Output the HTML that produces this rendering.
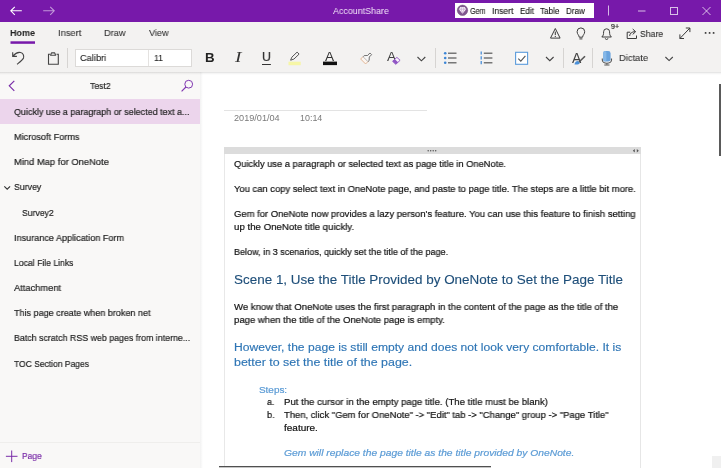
<!DOCTYPE html>
<html lang="en">
<head>
<meta charset="utf-8">
<title>AccountShare - OneNote</title>
<style>
html,body{margin:0;padding:0;}
body{width:721px;height:468px;overflow:hidden;background:#fff;position:relative;font-family:"Liberation Sans",sans-serif;}
.abs{position:absolute;}
#titlebar{left:0;top:0;width:721px;height:22px;background:#7719aa;}
#ribbon{left:0;top:22px;width:721px;height:50px;background:#f3f2f1;}
#ribshadow{left:0;top:72px;width:721px;height:3px;background:linear-gradient(to bottom,rgba(0,0,0,.13),rgba(0,0,0,.04) 50%,rgba(0,0,0,0));}
#gembox{left:455px;top:3px;width:139px;height:15px;background:#fff;}
#fontbox{left:75px;top:49px;width:117px;height:18px;background:#fff;border:1px solid #dcdad8;box-sizing:border-box;}
#fontdiv{left:148px;top:50px;width:1px;height:16px;background:#e4e2e0;}
#sidebar{left:0;top:72px;width:200px;height:396px;background:#f9f8f7;}
#sideshadow{left:200px;top:72px;width:3px;height:396px;background:linear-gradient(to right,rgba(0,0,0,.05),rgba(0,0,0,0));}
#corner{left:712px;top:456px;width:9px;height:12px;background:#f0f0f0;}
#sel{left:0;top:99px;width:200px;height:25px;background:#ecd5ec;}
#sidesep{left:0;top:442px;width:200px;height:1px;background:#efeeec;}
#note{left:224px;top:147px;width:417px;height:330px;border-left:1px solid #e8e8e8;border-right:1px solid #e6e6e6;box-sizing:border-box;}
#notebar{left:224px;top:147px;width:417px;height:7px;background:#dcdcdc;}
#titleline{left:224px;top:110px;width:203px;height:1px;background:#e3e3e3;}
#vscroll{left:719px;top:84px;width:2px;height:72px;background:#5a5a5a;}
#hscroll{left:219px;top:466px;width:272px;height:2px;background:linear-gradient(to bottom,#505050 0,#505050 50%,#c6c6c6 50%,#c6c6c6 100%);}
.t{position:absolute;white-space:nowrap;transform-origin:0 0;display:block;-webkit-text-stroke:0.2px;will-change:transform;}
svg{position:absolute;left:0;top:0;}
</style>
</head>
<body>
<div class="abs" id="titlebar"></div>
<div class="abs" id="ribbon"></div>
<div class="abs" id="gembox"></div>
<div class="abs" id="fontbox"></div>
<div class="abs" id="fontdiv"></div>
<div class="abs" id="sidebar"></div>
<div class="abs" id="sel"></div>
<div class="abs" id="sidesep"></div>
<div class="abs" id="sideshadow"></div>
<div class="abs" id="ribshadow"></div>
<div class="abs" id="titleline"></div>
<div class="abs" id="note"></div>
<div class="abs" id="notebar"></div>
<div class="abs" id="vscroll"></div>
<div class="abs" id="hscroll"></div>
<div class="abs" id="corner"></div>
<span class="t" id="t0" style="left:332.9px;top:6.07px;font-size:9.6px;line-height:9.6px;color:#f3e6f8;-webkit-text-stroke:0;transform:scaleX(0.9259)">AccountShare</span>
<span class="t" id="t1" style="left:470.4px;top:6.98px;font-size:9.0px;line-height:9.0px;color:#111;-webkit-text-stroke:0.1px;transform:scaleX(0.7994)">Gem</span>
<span class="t" id="t2" style="left:492.1px;top:6.98px;font-size:9.0px;line-height:9.0px;color:#111;-webkit-text-stroke:0.1px;transform:scaleX(0.9505)">Insert</span>
<span class="t" id="t3" style="left:519.6px;top:6.98px;font-size:9.0px;line-height:9.0px;color:#111;-webkit-text-stroke:0.1px;transform:scaleX(0.8959)">Edit</span>
<span class="t" id="t4" style="left:540.1px;top:6.98px;font-size:9.0px;line-height:9.0px;color:#111;-webkit-text-stroke:0.1px;transform:scaleX(0.9017)">Table</span>
<span class="t" id="t5" style="left:566.1px;top:6.98px;font-size:9.0px;line-height:9.0px;color:#111;-webkit-text-stroke:0.1px;transform:scaleX(0.8993)">Draw</span>
<span class="t" id="t6" style="left:10.1px;top:28.00px;font-size:9.8px;line-height:9.8px;color:#222;font-weight:bold;-webkit-text-stroke:0;transform:scaleX(0.9216)">Home</span>
<span class="t" id="t7" style="left:57.6px;top:28.00px;font-size:9.8px;line-height:9.8px;color:#333;-webkit-text-stroke:0.1px;transform:scaleX(0.9545)">Insert</span>
<span class="t" id="t8" style="left:104.1px;top:28.00px;font-size:9.8px;line-height:9.8px;color:#333;-webkit-text-stroke:0.1px;transform:scaleX(0.9443)">Draw</span>
<span class="t" id="t9" style="left:149.1px;top:28.00px;font-size:9.8px;line-height:9.8px;color:#333;-webkit-text-stroke:0.1px;transform:scaleX(0.9306)">View</span>
<span class="t" id="t10" style="left:610.8px;top:24.04px;font-size:6.8px;line-height:6.8px;color:#333;transform:scaleX(1.0452)">9+</span>
<span class="t" id="t11" style="left:640.1px;top:28.70px;font-size:9.8px;line-height:9.8px;color:#333;-webkit-text-stroke:0.15px;transform:scaleX(0.8832)">Share</span>
<span class="t" id="t12" style="left:80.3px;top:53.30px;font-size:9.8px;line-height:9.8px;color:#222;-webkit-text-stroke:0.1px;transform:scaleX(0.9436)">Calibri</span>
<span class="t" id="t13" style="left:153.9px;top:53.30px;font-size:9.8px;line-height:9.8px;color:#222;-webkit-text-stroke:0.1px;transform:scaleX(0.8750)">11</span>
<span class="t" id="t14" style="left:619.2px;top:53.30px;font-size:9.8px;line-height:9.8px;color:#333;-webkit-text-stroke:0.1px;transform:scaleX(0.9574)">Dictate</span>
<span class="t" id="t15" style="left:205.3px;top:51.00px;font-size:13px;line-height:13px;color:#222;font-weight:bold;-webkit-text-stroke:0;transform:scaleX(1.0223)">B</span>
<span class="t" id="t16" style="left:235.2px;top:50.08px;font-size:14.2px;line-height:14.2px;color:#333;-webkit-text-stroke:0;font-style:italic;font-family:'Liberation Serif',serif;transform:scaleX(1.3729)">I</span>
<span class="t" id="t17" style="left:261.9px;top:51.42px;font-size:12.5px;line-height:12.5px;color:#333;border-bottom:1px solid #333;padding-bottom:0.5px;transform:scaleX(0.9855)">U</span>
<span class="t" id="t18" style="left:325.4px;top:50.84px;font-size:12px;line-height:12px;color:#333;-webkit-text-stroke:0;transform:scaleX(1.1353)">A</span>
<span class="t" id="t19" style="left:386.8px;top:50.72px;font-size:12.5px;line-height:12.5px;color:#444;-webkit-text-stroke:0;transform:scaleX(1.0906)">A</span>
<span class="t" id="t20" style="left:572.0px;top:50.95px;font-size:14px;line-height:14px;color:#444;-webkit-text-stroke:0;transform:scaleX(0.9953)">A</span>
<span class="t" id="t21" style="left:90.0px;top:81.10px;font-size:9.8px;line-height:9.8px;color:#222;transform:scaleX(0.8838)">Test2</span>
<span class="t" id="t22" style="left:14.0px;top:107.00px;font-size:9.8px;line-height:9.8px;color:#222;transform:scaleX(0.9156)">Quickly use a paragraph or selected text a...</span>
<span class="t" id="t23" style="left:14.0px;top:132.15px;font-size:9.8px;line-height:9.8px;color:#222;transform:scaleX(0.9328)">Microsoft Forms</span>
<span class="t" id="t24" style="left:14.0px;top:157.30px;font-size:9.8px;line-height:9.8px;color:#222;transform:scaleX(0.9565)">Mind Map for OneNote</span>
<span class="t" id="t25" style="left:14.0px;top:182.45px;font-size:9.8px;line-height:9.8px;color:#222;transform:scaleX(0.8951)">Survey</span>
<span class="t" id="t26" style="left:22.4px;top:207.60px;font-size:9.8px;line-height:9.8px;color:#222;transform:scaleX(0.8817)">Survey2</span>
<span class="t" id="t27" style="left:14.0px;top:232.75px;font-size:9.8px;line-height:9.8px;color:#222;transform:scaleX(0.9274)">Insurance Application Form</span>
<span class="t" id="t28" style="left:14.0px;top:257.90px;font-size:9.8px;line-height:9.8px;color:#222;transform:scaleX(0.8811)">Local File Links</span>
<span class="t" id="t29" style="left:14.0px;top:283.05px;font-size:9.8px;line-height:9.8px;color:#222;transform:scaleX(0.9483)">Attachment</span>
<span class="t" id="t30" style="left:14.0px;top:308.20px;font-size:9.8px;line-height:9.8px;color:#222;transform:scaleX(0.9214)">This page create when broken net</span>
<span class="t" id="t31" style="left:14.0px;top:333.35px;font-size:9.8px;line-height:9.8px;color:#222;transform:scaleX(0.9014)">Batch scratch RSS web pages from interne...</span>
<span class="t" id="t32" style="left:14.0px;top:358.50px;font-size:9.8px;line-height:9.8px;color:#222;transform:scaleX(0.8680)">TOC Section Pages</span>
<span class="t" id="t33" style="left:21.6px;top:450.50px;font-size:9.8px;line-height:9.8px;color:#7a2da8;transform:scaleX(0.8606)">Page</span>
<span class="t" id="t34" style="left:233.6px;top:114.17px;font-size:8.3px;line-height:8.3px;color:#7a7a7a;-webkit-text-stroke:0;transform:scaleX(1.1004)">2019/01/04</span>
<span class="t" id="t35" style="left:300.1px;top:114.17px;font-size:8.3px;line-height:8.3px;color:#7a7a7a;-webkit-text-stroke:0;transform:scaleX(1.0739)">10:14</span>
<span class="t" id="t36" style="left:233.9px;top:158.59px;font-size:9.7px;line-height:9.7px;color:#111;transform:scaleX(0.9621)">Quickly use a paragraph or selected text as page title in OneNote.</span>
<span class="t" id="t37" style="left:233.9px;top:183.59px;font-size:9.7px;line-height:9.7px;color:#111;transform:scaleX(0.9715)">You can copy select text in OneNote page, and paste to page title. The steps are a little bit more.</span>
<span class="t" id="t38" style="left:233.9px;top:208.59px;font-size:9.7px;line-height:9.7px;color:#111;transform:scaleX(0.9743)">Gem for OneNote now provides a lazy person's feature. You can use this feature to finish setting</span>
<span class="t" id="t39" style="left:233.9px;top:221.59px;font-size:9.7px;line-height:9.7px;color:#111;transform:scaleX(0.9971)">up the OneNote title quickly.</span>
<span class="t" id="t40" style="left:233.9px;top:246.59px;font-size:9.7px;line-height:9.7px;color:#111;transform:scaleX(0.9333)">Below, in 3 scenarios, quickly set the title of the page.</span>
<span class="t" id="t41" style="left:233.9px;top:272.54px;font-size:13.3px;line-height:13.3px;color:#1e4e79;-webkit-text-stroke:0.12px;transform:scaleX(1.0118)">Scene 1, Use the Title Provided by OneNote to Set the Page Title</span>
<span class="t" id="t42" style="left:233.9px;top:301.99px;font-size:9.7px;line-height:9.7px;color:#111;transform:scaleX(0.9847)">We know that OneNote uses the first paragraph in the content of the page as the title of the</span>
<span class="t" id="t43" style="left:233.9px;top:314.99px;font-size:9.7px;line-height:9.7px;color:#111;transform:scaleX(0.9823)">page when the title of the OneNote page is empty.</span>
<span class="t" id="t44" style="left:233.9px;top:340.70px;font-size:11.7px;line-height:11.7px;color:#2e75b5;-webkit-text-stroke:0.15px;transform:scaleX(1.0350)">However, the page is still empty and does not look very comfortable. It is</span>
<span class="t" id="t45" style="left:233.9px;top:356.30px;font-size:11.7px;line-height:11.7px;color:#2e75b5;-webkit-text-stroke:0.15px;transform:scaleX(1.0630)">better to set the title of the page.</span>
<span class="t" id="t46" style="left:258.6px;top:384.79px;font-size:9.7px;line-height:9.7px;color:#5b9bd5;transform:scaleX(1.0230)">Steps:</span>
<span class="t" id="t47" style="left:266.9px;top:397.39px;font-size:9.7px;line-height:9.7px;color:#111;transform:scaleX(0.9019)">a.</span>
<span class="t" id="t48" style="left:283.6px;top:397.39px;font-size:9.7px;line-height:9.7px;color:#111;transform:scaleX(0.9881)">Put the cursor in the empty page title. (The title must be blank)</span>
<span class="t" id="t49" style="left:266.9px;top:410.19px;font-size:9.7px;line-height:9.7px;color:#111;transform:scaleX(0.9390)">b.</span>
<span class="t" id="t50" style="left:283.6px;top:410.19px;font-size:9.7px;line-height:9.7px;color:#111;transform:scaleX(0.9742)">Then, click "Gem for OneNote" -&gt; "Edit" tab -&gt; "Change" group -&gt; "Page Title"</span>
<span class="t" id="t51" style="left:283.6px;top:422.99px;font-size:9.7px;line-height:9.7px;color:#111;transform:scaleX(1.0317)">feature.</span>
<span class="t" id="t52" style="left:283.6px;top:447.99px;font-size:9.7px;line-height:9.7px;color:#5b9bd5;font-style:italic;transform:scaleX(1.0612)">Gem will replace the page title as the title provided by OneNote.</span>
<svg width="721" height="468" viewBox="0 0 721 468" fill="none" stroke-linecap="butt">
<!-- title bar -->
<g stroke="#fff">
<path d="M21.800 10.800H10.800M14.800 6.800L10.800 10.800l4 4" stroke-width="1.100"/>
<path d="M43.200 10.800h11M50.200 6.800l4 4-4 4" stroke-width="1.100" opacity=".55"/>
<path d="M608.500 5.500v10" stroke-width="1" opacity=".7"/>
<path d="M638 11h7.500" stroke-width="1" opacity=".72"/>
<rect x="670.500" y="7.500" width="7" height="7" stroke-width="1" opacity=".72"/>
<path d="M702.500 7l8 8M710.500 7l-8 8" stroke-width="1" opacity=".72"/>
</g>
<!-- gem icon -->
<circle cx="462.500" cy="10.300" r="5.200" fill="#80588f" stroke="#6b4479" stroke-width=".5"/>
<path d="M458.800 9.200l1.600-2.100h4.200l1.600 2.100-3.700 4.600z" fill="#f6eef8"/>
<path d="M458.800 9.200h7.400M461.100 9.200l1.400 4.400M463.900 9.200l-1.400 4.400M461.100 9.200l.7-2M463.900 9.200l-.7-2" stroke="#a583b3" stroke-width=".45"/>
<!-- home underline -->
<rect x="10.500" y="41.300" width="24.500" height="2.500" fill="#7719aa"/>
<!-- tab row icons -->
<g stroke="#3a3a3a" stroke-width="1">
<path d="M555.300 28.500l4.800 9.600h-9.600z" stroke-linejoin="round"/>
<path d="M555.300 31.600v3.400M555.300 35.900v1.100"/>
<path d="M579.200 37.200c0-2.100-2.100-2.900-2.100-5.500a3.800 3.800 0 0 1 7.600 0c0 2.600-2.100 3.400-2.100 5.500zM579.400 38.900h3"/>
<path d="M601.800 37h9.600c-1.600-1.400-1.800-2.600-1.800-5.200a3 3 0 0 0-6 0c0 2.600-.2 3.800-1.800 5.200zM605.300 38.300a1.300 1.200 0 0 0 2.600 0"/>
<path d="M630.300 32.200h-3.100v6.300h9.300v-3M629.600 36c.3-2.700 2.300-4.300 5.400-4.300M632.700 29l3 2.700-3 2.700" stroke-linejoin="round"/>
<path d="M679.900 38.500l10-10.500M685.800 28h4.100v4.100M679.900 34.400v4.100h4.100"/>
</g>
<g fill="#333"><circle cx="705.600" cy="32.900" r=".95"/><circle cx="709.600" cy="32.900" r=".95"/><circle cx="713.600" cy="32.900" r=".95"/></g>
<!-- toolbar -->
<g stroke="#444" stroke-width="1.100">
<path d="M12.700 52.200v4.200h4.200M12.900 56.200c2.200-2.700 5.200-4.200 7.600-3.700 2.500.5 3.700 3 3 5.500-.5 1.600-2.500 3.100-6.500 6.300"/>
<path d="M50.300 54.200h-1.800v10h9.800v-10h-1.800" stroke-linejoin="miter"/>
<path d="M50.600 55.300l.9-2.400h3.200l.9 2.400z" fill="#fff" stroke-linejoin="round"/>
</g>
<g stroke="#d6d4d2" stroke-width="1">
<path d="M67.500 48v20M435.500 48v20M563.500 48v20M592.500 48v20"/>
</g>
<!-- highlighter -->
<rect x="288.500" y="61.700" width="12.200" height="3.500" fill="#f6f6a6"/>
<path d="M290.600 60.200l1.300-3.100 5.200-5 2 2-5.200 5-3.300 1.100z" stroke="#555" stroke-width="1" stroke-linejoin="round"/>
<!-- font color -->
<rect x="323" y="61.600" width="14" height="3.500" fill="#111"/>
<!-- format painter -->
<g transform="translate(366.300 58.300) rotate(45)">
<path d="M-1.200 -6.300h2.400v3.300l2.400 2.600v1.700h-7v-1.700l2.400-2.600z" fill="#f7f7f7" stroke="#6a6a6a" stroke-width=".9" stroke-linejoin="round"/>
<path d="M-3.500 1.300v3.200h7v-3.200" fill="#fdf6f0" stroke="#e0b394" stroke-width=".9" stroke-linejoin="round"/>
</g>
<!-- clear formatting eraser -->
<path d="M392.600 61.300l4.300-3.900 3.200 2.900-4.300 4z" fill="#fbf6fd" stroke="#8a4cc0" stroke-width=".9" stroke-linejoin="round"/>
<path d="M392.600 61.300l2.300-2.100 3.200 3-2.300 2.100z" fill="#8f55c4"/>
<!-- chevrons -->
<g stroke="#444" stroke-width="1.100">
<path d="M417.500 57l3.900 3.800 3.900-3.800"/>
<path d="M546 57l3.800 3.700 3.800-3.700"/>
<path d="M665.400 57l3.700 3.600 3.700-3.600"/>
</g>
<!-- bullets -->
<g fill="#3c86d6"><circle cx="445.200" cy="53.200" r="1.300"/><circle cx="445.200" cy="58" r="1.300"/><circle cx="445.200" cy="62.800" r="1.300"/></g>
<g stroke="#777" stroke-width="1.400"><path d="M448 53.200h8.500M448 58h8.500M448 62.800h8.500"/></g>
<!-- numbered -->
<g stroke="#3c86d6" stroke-width="1.200"><path d="M481.200 51.400v3.200M481.200 56.200v3.200M481.200 61v3.200"/></g>
<g stroke="#777" stroke-width="1.400"><path d="M483.800 53.200h8.600M483.800 58h8.600M483.800 62.800h8.600"/></g>
<!-- checkbox -->
<rect x="515.600" y="52.300" width="12" height="12" fill="#fff" stroke="#5a9bdb" stroke-width="1.100"/>
<path d="M518.300 58.600l2.500 2.500 4.600-5.200" stroke="#555" stroke-width="1.100"/>
<!-- styles A pen -->
<path d="M585 56.200l-6.500 6.300" stroke="#555" stroke-width="1.600"/>
<path d="M574.500 64.500c.3-2 1.500-3.300 3.300-3.400l2 1.800c-.6 1.400-2.500 2-5.300 1.600z" fill="#4a90d9"/>
<!-- mic -->
<rect x="603.200" y="51" width="7.400" height="10.600" rx="2.400" fill="#6aa3dd"/>
<rect x="603.200" y="51" width="3.200" height="10.600" rx="1.600" fill="#86b8e8"/>
<path d="M602.300 58.600v1.400a4.600 3.300 0 0 0 9.200 0v-1.400" stroke="#555" stroke-width="1.100"/>
<path d="M606.900 63.300v1.500M604.300 65h5.200" stroke="#555" stroke-width="1"/>
<!-- sidebar -->
<path d="M14.300 80.800l-5 5 5 5" stroke="#7a2da8" stroke-width="1.200"/>
<circle cx="188.700" cy="84.200" r="3.900" stroke="#8037b0" stroke-width="1"/>
<path d="M185.900 87l-4.300 4.400" stroke="#8037b0" stroke-width="1.100"/>
<path d="M4.300 186.300l2.900 2.900 2.900-2.900" stroke="#333" stroke-width="1.100"/>
<path d="M5.900 456.300h11.600M11.700 450.500v11.600" stroke="#7a2da8" stroke-width="1"/>
<!-- note container -->
<g fill="#555"><circle cx="428.200" cy="150.800" r=".75"/><circle cx="430.700" cy="150.800" r=".75"/><circle cx="433.200" cy="150.800" r=".75"/><circle cx="435.700" cy="150.800" r=".75"/></g>
<path d="M634.800 149l-2 1.700 2 1.700zM636.800 149l2 1.700-2 1.700z" fill="#555"/>

</svg>
</body>
</html>
